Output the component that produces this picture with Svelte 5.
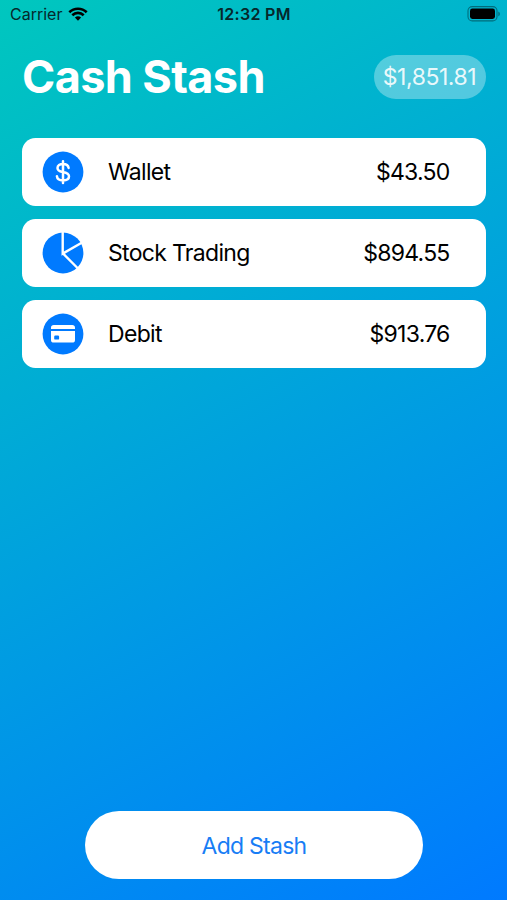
<script lang="ts">
	type Stash = {
		name: string;
		icon: 'dollar' | 'pie' | 'card';
		amount: string;
	};

	const stashes: Stash[] = [
		{ name: 'Wallet', icon: 'dollar', amount: '$43.50' },
		{ name: 'Stock Trading', icon: 'pie', amount: '$894.55' },
		{ name: 'Debit', icon: 'card', amount: '$913.76' }
	];

	const total = '$1,851.81';
</script>

<div class="screen">
	<div class="status">
		<div class="carrier">
			<span>Carrier</span>
			<svg class="wifi" viewBox="0 0 20 14">
				<path d="M1.3 5.2a12.5 12.5 0 0 1 17.4 0" />
				<path d="M4.3 8.2a8.2 8.2 0 0 1 11.4 0" />
				<path class="dot" d="M10 13.7 6.9 10.6a4.5 4.5 0 0 1 6.2 0z" />
			</svg>
		</div>
		<span class="time">12:32 PM</span>
		<svg class="battery" viewBox="0 0 34 16">
			<rect class="shell" x="1" y="0.6" width="29" height="14.3" rx="4.2" />
			<rect x="3" y="2.6" width="25" height="10.3" rx="2.4" />
			<path class="cap" d="M31.3 5.4c2.1.8 2.1 4 0 4.8z" />
		</svg>
	</div>

	<header>
		<h1>Cash Stash</h1>
		<span class="total">{total}</span>
	</header>

	<ul>
		{#each stashes as stash}
			<li>
				<svg class="icon" viewBox="0 0 42 42">
					<circle cx="21" cy="21" r="20.4" />
					{#if stash.icon === 'dollar'}
						<path
							class="line"
							d="M21 10.3v21.6M26.6 16.9c-.3-2.5-2.5-4-5.6-4-3.2 0-5.5 1.6-5.5 4.1 0 2.3 1.6 3.3 5.1 4 4.2.8 6.4 1.7 6.4 4.3 0 2.7-2.5 4.2-6 4.2-3.4 0-5.8-1.6-6.1-4.3"
						/>
					{:else if stash.icon === 'pie'}
						<path class="cut" d="M20.7 0v21.6L41 10M20.7 21.2 37.5 38" />
					{:else}
						<path
							class="fill"
							d="M9 16v-1.2c0-1.8 1-2.7 2.8-2.7h18.4c1.8 0 2.8.9 2.8 2.7V16zM9 18h24v8.9c0 1.8-1 2.7-2.8 2.7H11.8c-1.8 0-2.8-.9-2.8-2.7z"
						/>
						<rect x="12.2" y="22.6" width="4.9" height="4" rx="1.2" />
					{/if}
				</svg>
				<span class="name">{stash.name}</span>
				<span class="amount">{stash.amount}</span>
			</li>
		{/each}
	</ul>

	<button>Add Stash</button>
</div>

<style>
	:global(body) {
		margin: 0;
	}

	.screen {
		display: flex;
		flex-direction: column;
		box-sizing: border-box;
		width: 507px;
		height: 900px;
		padding: 0 21px 21px 22px;
		font-family: Inter, 'Liberation Sans', sans-serif;
		color: #000;
		background: linear-gradient(150.6deg, #00c7be, #007aff);
	}

	.status {
		display: grid;
		grid-template-columns: 1fr auto 1fr;
		align-items: center;
		height: 28px;
		margin: 0 -18px 0 -12px;
		padding-right: 6px;
		font-size: 16px;
		color: #06282b;
	}

	.carrier {
		display: flex;
		align-items: center;
		gap: 6px;
	}

	.wifi {
		width: 20px;
		height: 14px;
	}

	.wifi path {
		fill: none;
		stroke: #000;
		stroke-width: 2.6;
	}

	.wifi .dot {
		fill: #000;
		stroke: none;
	}

	.time {
		font-weight: 600;
		letter-spacing: 0.3px;
	}

	.battery {
		justify-self: end;
		width: 34px;
		height: 16px;
		margin-right: -3px;
	}

	.battery .shell {
		fill: none;
		stroke: #000;
		stroke-opacity: 0.4;
		stroke-width: 1.1;
	}

	.battery .cap {
		fill-opacity: 0.4;
	}

	header {
		display: flex;
		align-items: center;
		justify-content: space-between;
		height: 44px;
		margin-top: 27px;
	}

	h1 {
		margin: 0;
		font-size: 45px;
		font-weight: 700;
		line-height: 44px;
		letter-spacing: -0.6px;
		color: #fff;
	}

	.total {
		box-sizing: border-box;
		width: 112px;
		padding-right: 1px;
		border-radius: 22px;
		font-size: 23px;
		line-height: 44px;
		letter-spacing: -0.45px;
		text-align: center;
		color: rgba(255, 255, 255, 0.9);
		background: rgba(255, 255, 255, 0.32);
	}

	ul {
		display: flex;
		flex-direction: column;
		gap: 13.4px;
		margin: 39px 0 0;
		padding: 0;
		list-style: none;
	}

	li {
		display: flex;
		align-items: center;
		box-sizing: border-box;
		height: 67.6px;
		padding: 0 36.4px 0 20px;
		border-radius: 13.5px;
		font-size: 23px;
		background: #fff;
	}

	.icon {
		width: 42px;
		height: 42px;
		fill: #007aff;
	}

	.icon .line {
		fill: none;
		stroke: #fff;
		stroke-width: 2.5;
		stroke-linecap: round;
	}

	.icon .cut {
		fill: none;
		stroke: #fff;
		stroke-width: 2.4;
	}

	.icon .fill {
		fill: #fff;
	}

	.name {
		margin-left: 24px;
		letter-spacing: -0.68px;
	}

	.amount {
		margin-left: auto;
		letter-spacing: -0.75px;
	}

	button {
		align-self: center;
		width: 338px;
		height: 68px;
		margin-top: auto;
		padding: 1px 0 0;
		border: none;
		border-radius: 34px;
		font-family: inherit;
		font-size: 23px;
		letter-spacing: -0.75px;
		color: #187df5;
		background: #fff;
	}
</style>
